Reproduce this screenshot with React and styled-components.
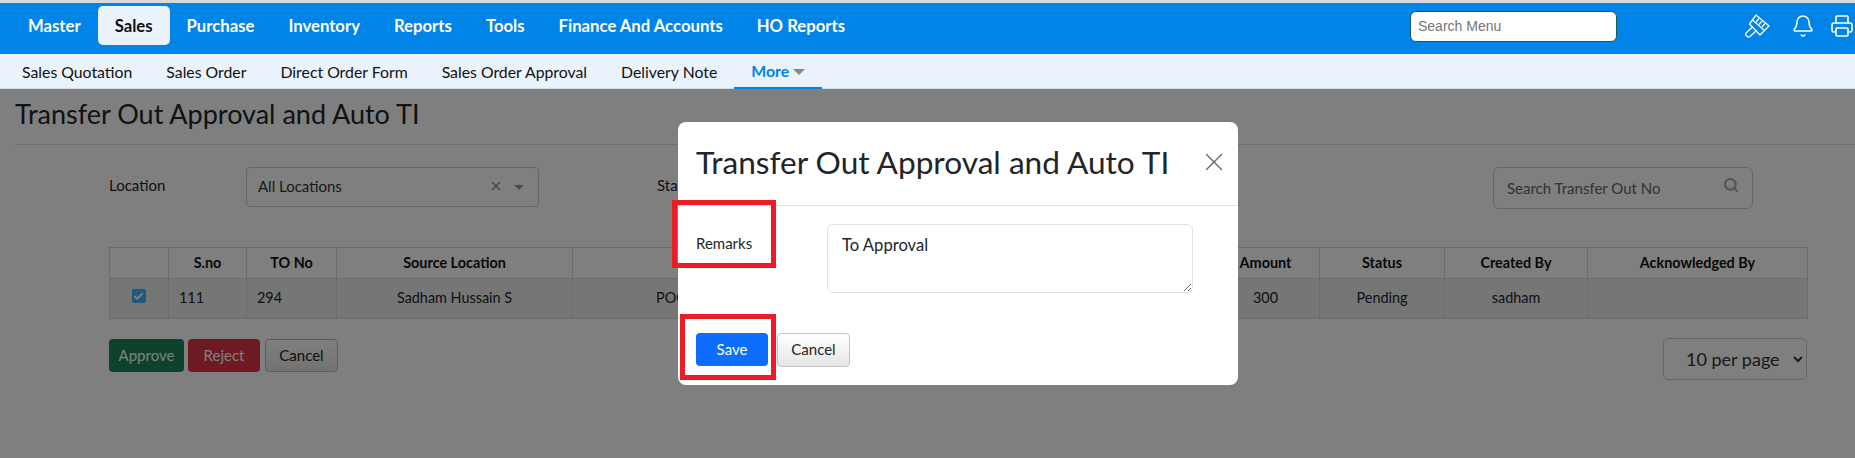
import React from "react";
import styled, { createGlobalStyle } from "styled-components";
import { Bell, Printer, Search, Check, X } from "lucide-react";

const GlobalStyle = createGlobalStyle`
  html, body { margin: 0; padding: 0; height: 100%; overflow: hidden; background: #d9d9d9; }
  #root { height: 100%; }
  * { box-sizing: border-box; }
  body { font-family: Lato, "Open Sans", sans-serif; color: #212529; }
`;

const Page = styled.div`
  height: 458px;
  padding-top: 3px;
  display: flex;
  flex-direction: column;
  overflow: hidden;
`;

const TopBar = styled.header`
  height: 51px;
  flex: none;
  background: #0084e8;
  display: flex;
  align-items: center;
  padding-left: 11px;
`;

const MainItem = styled.a`
  height: 39px;
  margin-top: -6px;
  padding: 0 17px;
  display: flex;
  align-items: center;
  border-radius: 5px;
  font-size: 16.7px;
  font-weight: 700;
  white-space: nowrap;
  color: ${({ $active }) => ($active ? "#111" : "#fff")};
  background: ${({ $active }) => ($active ? "#eaf3fb" : "transparent")};
`;

const MenuSearch = styled.input`
  width: 207px;
  height: 31px;
  margin: -5px 0 0 auto;
  padding: 0 7px;
  border: 1px solid #1d5a55;
  border-radius: 6px;
  background: #fff;
  font-family: "Liberation Sans", Arial, sans-serif;
  font-size: 14px;
  &::placeholder { color: #757575; opacity: 1; }
`;

const TopIcons = styled.div`
  width: 238px;
  flex: none;
  display: flex;
  align-items: center;
  color: #fff;
  padding-left: 128px;
  margin-top: -6px;
  gap: 21px;
  & > svg { flex: none; }
`;

const PrinterIcon = styled(Printer)`
  margin-left: -6px;
`;

const SubBar = styled.nav`
  height: 35px;
  flex: none;
  background: #eaf3fb;
  border-bottom: 1px solid #cfdce8;
  display: flex;
  padding-left: 5px;
`;

const SubItem = styled.a`
  height: 35px;
  padding: 0 17px;
  display: flex;
  align-items: center;
  font-size: 15.8px;
  white-space: nowrap;
  color: #111;
`;

const MoreItem = styled(SubItem)`
  font-weight: 700;
  color: #0084e8;
  border-bottom: 2px solid #0084e8;
  gap: 4px;
`;

const Caret = styled.span`
  width: 0;
  height: 0;
  margin-top: 2px;
  border-left: 6px solid transparent;
  border-right: 6px solid transparent;
  border-top: 6px solid #888;
`;

const Main = styled.main`
  position: relative;
  flex: 1;
  background: #fff;
  overflow: hidden;
`;

const PageTitle = styled.h1`
  margin: 0 0 0 15px;
  height: 56px;
  padding-top: 7px;
  border-bottom: 1px solid #ddd;
  font-size: 27px;
  line-height: 36px;
  font-weight: 400;
`;

const Filters = styled.div`
  display: flex;
  align-items: flex-start;
  padding: 22px 102px 0 109px;
  height: 102px;
`;

const FilterLabel = styled.label`
  width: ${({ $w }) => $w}px;
  flex: none;
  font-size: 15px;
  line-height: 36px;
`;

const LocationSelect = styled.div`
  width: 293px;
  height: 40px;
  flex: none;
  margin-right: 118px;
  padding: 0 11px 2px;
  display: flex;
  align-items: center;
  border: 1px solid #ccc;
  border-radius: 4px;
  font-size: 15px;
  color: #333;
  & > span:first-child { flex: 1; }
`;

const ClearMark = styled(X)`
  color: #888;
  margin-right: 11px;
`;

const SelectCaret = styled(Caret)`
  margin: 2px 3px 0 0;
  border-left-width: 5px;
  border-right-width: 5px;
  border-top-width: 5px;
  border-top-color: #999;
`;

const SearchBox = styled.div`
  width: 260px;
  height: 42px;
  margin-left: auto;
  padding: 0 13px;
  display: flex;
  align-items: center;
  justify-content: space-between;
  border: 1px solid #ccc;
  border-radius: 6px;
  font-size: 15px;
  color: #666;
  & > svg { color: #aaa; margin: -6px 0 0 0; }
`;

const TableWrap = styled.div`
  padding: 0 48px 0 109px;
`;

const Table = styled.table`
  width: 1698px;
  border-collapse: collapse;
  table-layout: fixed;
  font-size: 14.4px;
  th, td { border: 1px solid #d8d8d8; padding: 0 10px 2px; text-align: center; overflow: hidden; white-space: nowrap; }
  th { height: 31px; font-weight: 700; color: #111; }
  td { height: 40px; background: #ececec; }
`;

const LeftCell = styled.td`
  && { text-align: left; }
`;

const CheckMark = styled.span`
  width: 14px;
  height: 14px;
  margin: -6px 0 0 -1px;
  display: inline-flex;
  align-items: center;
  justify-content: center;
  vertical-align: middle;
  border-radius: 2px;
  background: #3db4ff;
  color: #fff;
`;

const Actions = styled.div`
  display: flex;
  align-items: flex-start;
  padding: 20px 48px 0 109px;
`;

const Button = styled.button`
  height: ${({ $h }) => $h || 33}px;
  width: ${({ $w }) => $w}px;
  margin-right: ${({ $mr }) => $mr || 0}px;
  padding: 0 0 2px;
  border-radius: 4px;
  font-family: inherit;
  font-size: 15px;
  color: ${({ $fg }) => $fg || "#fff"};
  background: ${({ $bg }) => $bg};
  border: 1px solid ${({ $line }) => $line || "transparent"};
`;

const PerPage = styled.select`
  width: 144px;
  height: 42px;
  margin: -1px 0 0 auto;
  padding: 0 0 0 18px;
  border: 1px solid #ccc;
  border-radius: 5px;
  background: #fff;
  color: #333;
  font-family: Lato, sans-serif;
  font-size: 18px;
`;

const Backdrop = styled.div`
  position: absolute;
  inset: 0;
  background: rgba(0, 0, 0, 0.5);
`;

const Modal = styled.div`
  position: absolute;
  left: 678px;
  top: 33px;
  width: 560px;
  height: 263px;
  background: #fff;
  border-radius: 8px;
  display: flex;
  flex-direction: column;
`;

const ModalHead = styled.div`
  height: 84px;
  flex: none;
  padding: 0 9px 3px 18px;
  display: flex;
  align-items: center;
  justify-content: space-between;
  border-bottom: 1px solid #dee2e6;
`;

const ModalTitle = styled.h2`
  margin: 0;
  font-size: 31.6px;
  font-weight: 400;
  white-space: nowrap;
`;

const CloseMark = styled(X)`
  color: #666;
`;

const ModalBody = styled.div`
  display: flex;
  padding: 18px 45px 0 18px;
`;

const RemarkLabel = styled.label`
  width: 131px;
  flex: none;
  padding-top: 9px;
  font-size: 15px;
  line-height: 20px;
`;

const Remark = styled.textarea`
  width: 366px;
  height: 69px;
  padding: 8px 14px;
  border: 1px solid #dee2e6;
  border-radius: 6px;
  font-family: Lato, sans-serif;
  font-size: 16.6px;
  line-height: 24px;
  color: #212529;
  outline: none;
`;

const ModalFoot = styled.div`
  display: flex;
  gap: 9px;
  padding: 40px 0 0 18px;
`;

const Callout = styled.div`
  position: absolute;
  left: ${({ $x }) => $x}px;
  top: ${({ $y }) => $y}px;
  width: ${({ $w }) => $w}px;
  height: ${({ $h }) => $h}px;
  border: 5px solid #ed1c24;
  pointer-events: none;
`;

const menu = ["Master", "Sales", "Purchase", "Inventory", "Reports", "Tools", "Finance And Accounts", "HO Reports"];
const subMenu = ["Sales Quotation", "Sales Order", "Direct Order Form", "Sales Order Approval", "Delivery Note"];
const columns = [
  ["", 59],
  ["S.no", 78],
  ["TO No", 90],
  ["Source Location", 236],
  ["Location", 274],
  ["Date", 190],
  ["Remarks", 175],
  ["Amount", 108],
  ["Status", 125],
  ["Created By", 143],
  ["Acknowledged By", 220],
];

// flat brush, no package has this exact one
const BrushIcon = () => (
  <svg width="25" height="24" viewBox="0 0 25 24" fill="none" stroke="currentColor" strokeWidth="1.3" strokeLinejoin="round" strokeLinecap="round">
    <path d="M11 1 24 12 15 21 4.5 10z" />
    <path d="M8 6.5 19.5 16.5" />
    <path d="M13.5 5 11.5 7.5M16.5 7.5l-2 2.5M19.5 10l-2 2.5" />
    <path d="M7.5 13 1.5 18.5c-1 1.2-.8 2.7.4 3.8s2.6.9 3.6-.2l6-5.6" />
  </svg>
);

export default function App() {
  return (
    <Page>
      <GlobalStyle />
      <TopBar>
        {menu.map((m) => (
          <MainItem key={m} $active={m === "Sales"}>{m}</MainItem>
        ))}
        <MenuSearch placeholder="Search Menu" />
        <TopIcons>
          <BrushIcon />
          <Bell size={24} strokeWidth={1.5} />
          <PrinterIcon size={24} strokeWidth={1.6} />
        </TopIcons>
      </TopBar>
      <SubBar>
        {subMenu.map((s) => (
          <SubItem key={s}>{s}</SubItem>
        ))}
        <MoreItem>More <Caret /></MoreItem>
      </SubBar>
      <Main>
        <PageTitle>Transfer Out Approval and Auto TI</PageTitle>
        <Filters>
          <FilterLabel $w={137}>Location</FilterLabel>
          <LocationSelect>
            <span>All Locations</span>
            <ClearMark size={14} />
            <SelectCaret />
          </LocationSelect>
          <FilterLabel $w={60}>Status</FilterLabel>
          <SearchBox>
            <span>Search Transfer Out No</span>
            <Search size={16} strokeWidth={3.2} />
          </SearchBox>
        </Filters>
        <TableWrap>
          <Table>
            <colgroup>
              {columns.map(([name, w]) => (
                <col key={name} width={w} />
              ))}
            </colgroup>
            <thead>
              <tr>
                {columns.map(([name]) => (
                  <th key={name}>{name}</th>
                ))}
              </tr>
            </thead>
            <tbody>
              <tr>
                <td><CheckMark><Check size={11} strokeWidth={4} /></CheckMark></td>
                <LeftCell>111</LeftCell>
                <LeftCell>294</LeftCell>
                <td>Sadham Hussain S</td>
                <td>POONAMALLEE</td>
                <td>12-08-2024</td>
                <td>To Approval</td>
                <td>300</td>
                <td>Pending</td>
                <td>sadham</td>
                <td></td>
              </tr>
            </tbody>
          </Table>
        </TableWrap>
        <Actions>
          <Button $w={75} $mr={4} $bg="#198754">Approve</Button>
          <Button $w={72} $mr={5} $bg="#dc3545">Reject</Button>
          <Button $w={73} $fg="#212529" $line="#bbb" $bg="linear-gradient(#fff, #e6e6e6)">Cancel</Button>
          <PerPage defaultValue="10">
            <option value="10">10 per page</option>
          </PerPage>
        </Actions>
        <Backdrop>
          <Modal>
            <ModalHead>
              <ModalTitle>Transfer Out Approval and Auto TI</ModalTitle>
              <CloseMark size={30} strokeWidth={1.1} />
            </ModalHead>
            <ModalBody>
              <RemarkLabel>Remarks</RemarkLabel>
              <Remark defaultValue="To Approval" />
            </ModalBody>
            <ModalFoot>
              <Button $w={72} $bg="#0d6efd" $h={33}>Save</Button>
              <Button $w={73} $h={34} $fg="#212529" $line="#c4c4c4" $bg="linear-gradient(#fff, #e6e6e6)">Cancel</Button>
            </ModalFoot>
            <Callout $x={-6} $y={78} $w={104} $h={68} />
            <Callout $x={2} $y={192} $w={96} $h={66} />
          </Modal>
        </Backdrop>
      </Main>
    </Page>
  );
}
